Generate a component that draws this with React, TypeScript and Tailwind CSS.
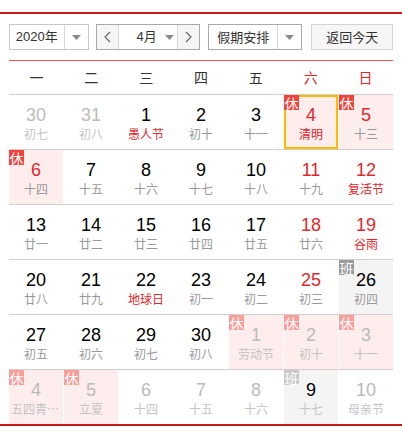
import React from 'react';

type Day = {
  d: number;
  l: string;
  other?: boolean;
  red?: boolean;
  fest?: boolean;
  tag?: 'rest' | 'work';
  sel?: boolean;
};

const weeks: Day[][] = [
  [
    { d: 30, l: '初七', other: true },
    { d: 31, l: '初八', other: true },
    { d: 1, l: '愚人节', fest: true },
    { d: 2, l: '初十' },
    { d: 3, l: '十一' },
    { d: 4, l: '清明', red: true, fest: true, tag: 'rest', sel: true },
    { d: 5, l: '十三', red: true, tag: 'rest' },
  ],
  [
    { d: 6, l: '十四', red: true, tag: 'rest' },
    { d: 7, l: '十五' },
    { d: 8, l: '十六' },
    { d: 9, l: '十七' },
    { d: 10, l: '十八' },
    { d: 11, l: '十九', red: true },
    { d: 12, l: '复活节', red: true, fest: true },
  ],
  [
    { d: 13, l: '廿一' },
    { d: 14, l: '廿二' },
    { d: 15, l: '廿三' },
    { d: 16, l: '廿四' },
    { d: 17, l: '廿五' },
    { d: 18, l: '廿六', red: true },
    { d: 19, l: '谷雨', red: true, fest: true },
  ],
  [
    { d: 20, l: '廿八' },
    { d: 21, l: '廿九' },
    { d: 22, l: '地球日', fest: true },
    { d: 23, l: '初一' },
    { d: 24, l: '初二' },
    { d: 25, l: '初三', red: true },
    { d: 26, l: '初四', tag: 'work' },
  ],
  [
    { d: 27, l: '初五' },
    { d: 28, l: '初六' },
    { d: 29, l: '初七' },
    { d: 30, l: '初八' },
    { d: 1, l: '劳动节', other: true, fest: true, tag: 'rest' },
    { d: 2, l: '初十', other: true, tag: 'rest' },
    { d: 3, l: '十一', other: true, tag: 'rest' },
  ],
  [
    { d: 4, l: '五四青年节', other: true, fest: true, tag: 'rest' },
    { d: 5, l: '立夏', other: true, tag: 'rest' },
    { d: 6, l: '十四', other: true },
    { d: 7, l: '十五', other: true },
    { d: 8, l: '十六', other: true },
    { d: 9, l: '十七', other: true, tag: 'work' },
    { d: 10, l: '母亲节', other: true, fest: true },
  ],
];

const Caret = () => (
  <svg width="9" height="5" viewBox="0 0 9 5">
    <path d="M0 0h9L4.5 5z" fill="#888" />
  </svg>
);

const Chevron = ({ dir }: { dir: 'l' | 'r' }) => (
  <svg width="7" height="12" viewBox="0 0 7 12">
    <path
      d={dir === 'l' ? 'M6 1L1 6l5 5' : 'M1 1l5 5-5 5'}
      fill="none"
      stroke="#666"
      strokeWidth="1.2"
    />
  </svg>
);

const Cell = ({ day }: { day: Day }) => {
  let bg = 'bg-white';
  if (day.tag === 'rest') bg = 'bg-[#fdeded]';
  if (day.tag === 'work') bg = 'bg-[#f4f4f4]';

  let numColor = 'text-black';
  if (day.other) numColor = 'text-[#bbb]';
  else if (day.red || day.tag === 'rest') numColor = 'text-[#e3262b]';
  if (day.tag === 'work') numColor = 'text-black';

  let lunColor = 'text-[#999]';
  if (day.other) lunColor = 'text-[#c4c4c4]';
  else if (day.fest) lunColor = 'text-[#e3262b]';

  let badge = '';
  if (day.tag === 'rest') badge = day.other ? 'bg-[#fb9d98]' : 'bg-[#f4413b]';
  if (day.tag === 'work') badge = day.other ? 'bg-[#c9c9c9]' : 'bg-[#9a9a9a]';

  return (
    <div
      className={`relative h-[54px] w-[54px] ${bg} ${day.sel ? 'border-2 border-[#ffbb00]' : ''} flex flex-col items-center`}
    >
      {day.tag && (
        <span
          className={`absolute ${day.sel ? '-left-[2px] -top-[2px]' : 'left-0 top-0'} flex h-[15px] w-[15px] items-center justify-center ${badge} text-white text-[14px] leading-none`}
        >
          {day.tag === 'rest' ? '休' : '班'}
        </span>
      )}
      <div
        className={`${day.sel ? 'mt-[7px]' : 'mt-[9px]'} text-[18px] leading-[22px] font-['Liberation_Sans',sans-serif] ${numColor}`}
      >
        {day.d}
      </div>
      <div className={`w-[50px] truncate text-center text-[12px] leading-[16px] ${lunColor}`}>
        {day.l}
      </div>
    </div>
  );
};

export default function App() {
  const heads = ['一', '二', '三', '四', '五', '六', '日'];
  return (
    <div className="w-[402px] h-[433px] bg-white pt-3 font-['Noto_Sans_CJK_SC','Noto_Sans',sans-serif]">
      <div className="border-t-2 border-b-2 border-[#c8191a] px-[9px] pt-[10px]">
        <div className="flex items-center h-[26px] text-[13px] text-[#333]">
          <div className="flex h-[26px] w-[80px] border border-[#c6c6c6]">
            <div className="flex-1 flex items-center justify-center font-['Liberation_Sans','Noto_Sans_CJK_SC',sans-serif]">2020年</div>
            <div className="w-[24px] border-l border-[#d6d6d6] flex items-center justify-center">
              <Caret />
            </div>
          </div>
          <div className="ml-[7px] flex h-[26px] w-[105px] border border-[#a9a9a9]">
            <div className="w-[22px] bg-[#f6f6f6] flex items-center justify-center border-r border-[#d6d6d6]">
              <Chevron dir="l" />
            </div>
            <div className="flex-1 flex items-center pl-[10px]">
              <span className="w-[36px] text-center font-['Liberation_Sans','Noto_Sans_CJK_SC',sans-serif]">4月</span>
              <Caret />
            </div>
            <div className="w-[22px] bg-[#f6f6f6] flex items-center justify-center border-l border-[#d6d6d6]">
              <Chevron dir="r" />
            </div>
          </div>
          <div className="ml-[8px] flex h-[26px] w-[95px] border border-[#a9a9a9]">
            <div className="flex-1 flex items-center justify-center">假期安排</div>
            <div className="w-[24px] border-l border-[#d6d6d6] flex items-center justify-center">
              <Caret />
            </div>
          </div>
          <div className="ml-[9px] h-[26px] w-[82px] border border-[#d3d3d3] bg-[#f6f6f6] flex items-center justify-center">
            返回今天
          </div>
        </div>

        <div className="mt-[10px] border-t border-[#e8574f]">
          <div className="grid grid-cols-7 h-[33px] items-center text-[14px]">
            {heads.map((h, i) => (
              <div key={h} className={`text-center ${i >= 5 ? 'text-[#e3262b]' : 'text-[#333]'}`}>
                {h}
              </div>
            ))}
          </div>
          {weeks.map((w, i) => (
            <div key={i} className="flex gap-[1px] border-t border-[#cfcfcf]">
              {w.map((day, j) => (
                <Cell key={j} day={day} />
              ))}
            </div>
          ))}
        </div>
      </div>
    </div>
  );
}
